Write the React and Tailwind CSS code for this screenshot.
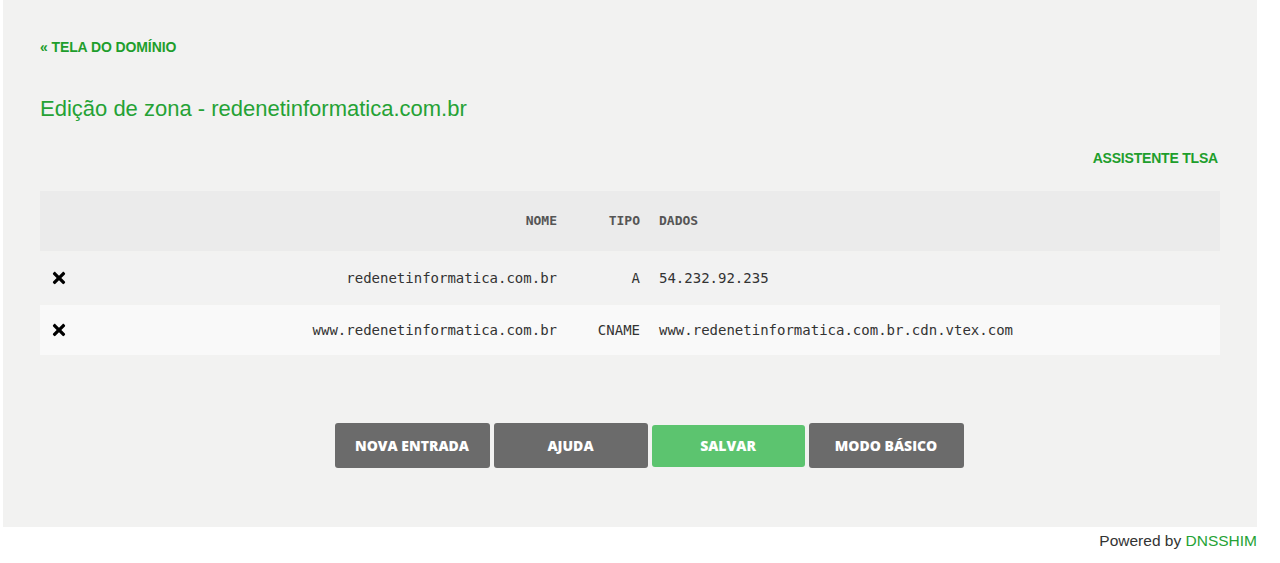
import React from 'react';
import { FaTimes } from 'react-icons/fa';

const RECORDS = [
  { nome: 'redenetinformatica.com.br', tipo: 'A', dados: '54.232.92.235', bg: 'bg-[#f2f2f2]', h: 'h-[48px]' },
  { nome: 'www.redenetinformatica.com.br', tipo: 'CNAME', dados: 'www.redenetinformatica.com.br.cdn.vtex.com', bg: 'bg-[#f9f9f9]', h: 'h-[50px]' },
];

const COLS = 'grid grid-cols-[50px_477px_83px_1fr] items-center';

export default function App() {
  return (
    <div className="w-[1280px] h-[563px] bg-white font-['Liberation_Sans',Arial,sans-serif]">
      {/* painel principal */}
      <div className="ml-[3px] w-[1254px] h-[527px] bg-[#f2f2f1] pl-[37px] pr-[37px] pt-[39px]">
        <a className="block text-[14px] font-bold leading-[16px] text-[#1e9e2c] tracking-[-0.1px]">« TELA DO DOMÍNIO</a>

        <h1 className="mt-[42px] text-[22px] leading-[24px] text-[#25a235]">
          Edição de zona - redenetinformatica.com.br
        </h1>

        <div className="mt-[29px] flex justify-end">
          <a className="text-[14px] font-bold leading-[16px] text-[#1e9e2c] mr-[2px] tracking-[-0.2px]">ASSISTENTE TLSA</a>
        </div>

        {/* tabela de registros */}
        <div className="mt-[25px] font-['DejaVu_Sans_Mono','Liberation_Mono',monospace] text-[14px]">
          <div className={`${COLS} h-[60px] bg-[#ebebeb] font-bold text-[#555] text-[13px]`}>
            <div />
            <div className="text-right pr-[10px]">NOME</div>
            <div className="text-right pr-[10px]">TIPO</div>
            <div className="pl-[9px]">DADOS</div>
          </div>
          {RECORDS.map((r) => (
            <div key={r.nome} className={`${COLS} ${r.h} mt-[3px] ${r.bg} text-[#333]`}>
              <div className="pl-[10px] text-black">
                <FaTimes size={18} />
              </div>
              <div className="text-right pr-[10px]">{r.nome}</div>
              <div className="text-right pr-[10px]">{r.tipo}</div>
              <div className="pl-[9px]">{r.dados}</div>
            </div>
          ))}
        </div>

        {/* botões */}
        <div className="mt-[68px] flex justify-center items-center gap-[4px] font-['Open_Sans',sans-serif] font-extrabold text-[14px] text-white">
          <button className="w-[155px] h-[45px] rounded-[3px] bg-[#6b6b6b] ml-[38px]">NOVA ENTRADA</button>
          <button className="w-[154px] h-[45px] rounded-[3px] bg-[#6b6b6b]">AJUDA</button>
          <button className="w-[153px] h-[42px] rounded-[3px] bg-[#5cc46f]">SALVAR</button>
          <button className="w-[155px] h-[45px] rounded-[3px] bg-[#6b6b6b]">MODO BÁSICO</button>
        </div>
      </div>

      <div className="w-[1257px] text-right text-[15.5px] leading-[28px] text-[#333]">
        Powered by <span className="text-[#25a235]">DNSSHIM</span>
      </div>
    </div>
  );
}
